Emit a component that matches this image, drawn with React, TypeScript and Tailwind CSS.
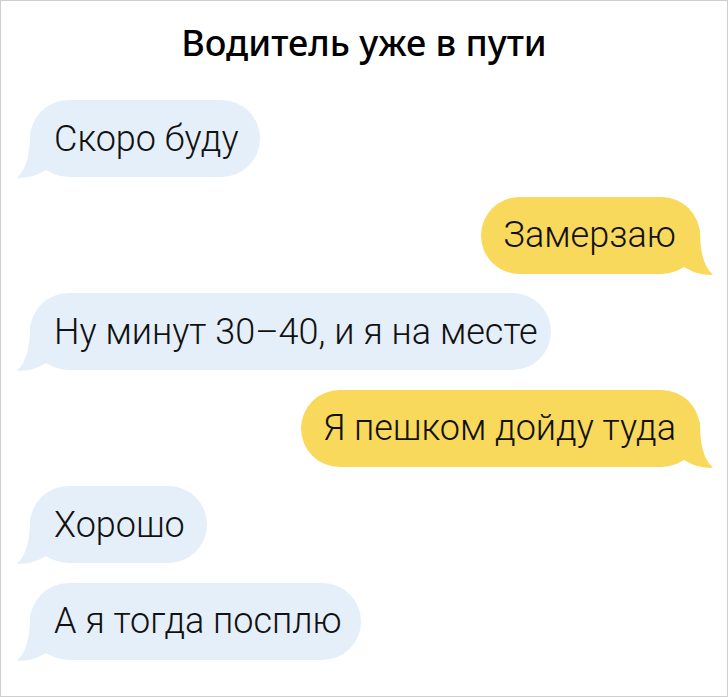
import React from "react";

type Msg = { text: string; mine: boolean; w: string };

const msgs: Msg[] = [
  { text: "Скоро буду", mine: false, w: "w-[230px]" },
  { text: "Замерзаю", mine: true, w: "w-[219px]" },
  { text: "Ну минут 30–40, и я на месте", mine: false, w: "w-[521px]" },
  { text: "Я пешком дойду туда", mine: true, w: "w-[399px]" },
  { text: "Хорошо", mine: false, w: "w-[177px]" },
  { text: "А я тогда посплю", mine: false, w: "w-[331px]" },
];

function Tail({ mine, color }: { mine: boolean; color: string }) {
  return (
    <svg
      width="45"
      height="50"
      viewBox="0 0 45 50"
      className={
        mine
          ? "absolute right-[-13px] bottom-[-1px] -scale-x-100"
          : "absolute left-[-13px] bottom-[-1px]"
      }
    >
      <path
        d="M13 4 C13 26 10 40 0 50 C12 50 21 47 29 42 L45 46 L45 4 Z"
        fill={color}
      />
    </svg>
  );
}

function Bubble({ m }: { m: Msg }) {
  const color = m.mine ? "#f9d95b" : "#e5eff9";
  return (
    <div className={m.mine ? "flex justify-end pr-[27px]" : "flex justify-start pl-[29px]"}>
      <div
        className={
          "relative h-[77px] rounded-full flex items-center " +
          m.w +
          " " +
          (m.mine ? "bg-[#f9d95b] justify-end pr-[24px]" : "bg-[#e5eff9] pl-[24px]")
        }
      >
        <Tail mine={m.mine} color={color} />
        <span className="relative text-[36px] font-light text-[#111] leading-none whitespace-nowrap [font-family:Roboto,sans-serif]">
          {m.text}
        </span>
      </div>
    </div>
  );
}

export default function App() {
  return (
    <div className="w-[728px] h-[697px] bg-white border border-[#cfcfcf] overflow-hidden [font-family:Roboto,sans-serif]">
      <div className="pt-[20px] text-center text-[36px] font-medium text-black leading-[44px] [font-family:'Noto_Sans',sans-serif]">
        Водитель уже в пути
      </div>
      <div className="mt-[35px] flex flex-col gap-[19.5px]">
        {msgs.map((m, i) => (
          <Bubble key={i} m={m} />
        ))}
      </div>
    </div>
  );
}
